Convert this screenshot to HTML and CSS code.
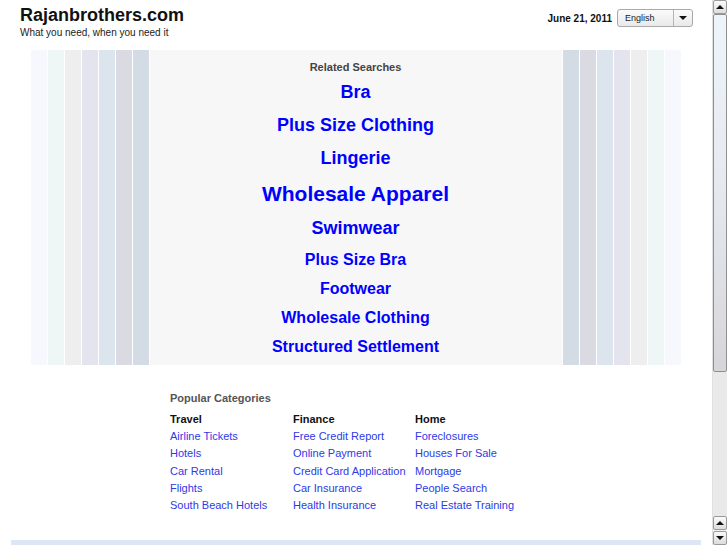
FILE: index.html
```html
<!DOCTYPE html>
<html>
<head>
<meta charset="utf-8">
<title>Rajanbrothers.com</title>
<link rel="stylesheet" href="styles.css">
</head>
<body>
<div class="page">
  <header class="header">
    <div class="brand">
      <div class="site-name">Rajanbrothers.com</div>
      <div class="tagline">What you need, when you need it</div>
    </div>
    <div class="tools">
      <span class="date">June 21, 2011</span>
      <div class="select">
        <span class="select-text">English</span>
        <span class="select-btn"><span class="tri-down"></span></span>
      </div>
    </div>
  </header>

  <div class="band">
    <div class="stripes left">
      <span class="st c1"></span><span class="st c2"></span><span class="st c3"></span><span class="st c4"></span><span class="st c5"></span><span class="st c6"></span><span class="st c7"></span>
    </div>
    <div class="panel">
      <div class="rs-title">Related Searches</div>
      <a class="rs s18" href="#">Bra</a>
      <a class="rs s18" href="#">Plus Size Clothing</a>
      <a class="rs s18" href="#">Lingerie</a>
      <a class="rs s21" href="#">Wholesale Apparel</a>
      <a class="rs s18" href="#">Swimwear</a>
      <a class="rs s16" href="#">Plus Size Bra</a>
      <a class="rs s16" href="#">Footwear</a>
      <a class="rs s16" href="#">Wholesale Clothing</a>
      <a class="rs s16" href="#">Structured Settlement</a>
    </div>
    <div class="stripes right">
      <span class="st c7"></span><span class="st c6"></span><span class="st c5"></span><span class="st c4"></span><span class="st c3"></span><span class="st c2"></span><span class="st c1"></span>
    </div>
  </div>

  <section class="cats">
    <div class="cats-title">Popular Categories</div>
    <div class="cats-grid">
      <div class="col">
        <div class="col-head">Travel</div>
        <a href="#">Airline Tickets</a>
        <a href="#">Hotels</a>
        <a href="#">Car Rental</a>
        <a href="#">Flights</a>
        <a href="#">South Beach Hotels</a>
      </div>
      <div class="col">
        <div class="col-head">Finance</div>
        <a href="#">Free Credit Report</a>
        <a href="#">Online Payment</a>
        <a href="#">Credit Card Application</a>
        <a href="#">Car Insurance</a>
        <a href="#">Health Insurance</a>
      </div>
      <div class="col">
        <div class="col-head">Home</div>
        <a href="#">Foreclosures</a>
        <a href="#">Houses For Sale</a>
        <a href="#">Mortgage</a>
        <a href="#">People Search</a>
        <a href="#">Real Estate Training</a>
      </div>
    </div>
  </section>

  <div class="footer-bar"></div>
</div>

<div class="scrollbar">
  <div class="sb-btn"><span class="tri-up"></span></div>
  <div class="sb-thumb"></div>
  <div class="sb-track"></div>
  <div class="sb-btn"><span class="tri-up"></span></div>
  <div class="sb-btn"><span class="tri-down small"></span></div>
</div>
</body>
</html>
```

FILE: styles.css
```css
html, body {
  margin: 0;
  padding: 0;
  height: 100%;
  overflow: hidden;
  background: #ffffff;
}

body {
  font-family: "Liberation Sans", Arial, Helvetica, sans-serif;
  color: #000;
}

a { text-decoration: none; }

.page {
  width: 712px;
}

/* Header */
.header {
  display: flex;
  justify-content: space-between;
  align-items: flex-start;
  padding: 5px 19px 0 20px;
  height: 45px;
  box-sizing: border-box;
}

.site-name {
  font-size: 18px;
  font-weight: bold;
  line-height: 20px;
  color: #111;
}

.tagline {
  margin-top: 2px;
  font-size: 10px;
  line-height: 12px;
  color: #222;
}

.tools {
  display: flex;
  align-items: center;
  gap: 5px;
  margin-top: 4px;
}

.date {
  font-size: 10px;
  font-weight: bold;
  color: #111;
}

.select {
  display: flex;
  width: 76px;
  height: 18px;
  box-sizing: border-box;
  border: 1px solid #a9a9a9;
  border-radius: 3px;
  background: linear-gradient(#fbfbfb, #e9e9e9);
}

.select-text {
  flex: 1;
  font-size: 9px;
  line-height: 16px;
  padding-left: 7px;
  color: #222;
}

.select-btn {
  width: 18px;
  border-left: 1px solid #b5b5b5;
  display: flex;
  align-items: center;
  justify-content: center;
}

.tri-down {
  width: 0;
  height: 0;
  border-left: 4px solid transparent;
  border-right: 4px solid transparent;
  border-top: 4px solid #111;
}

.tri-up {
  width: 0;
  height: 0;
  border-left: 4px solid transparent;
  border-right: 4px solid transparent;
  border-bottom: 4px solid #111;
}

/* Band with stripes */
.band {
  display: flex;
  width: 651px;
  margin: 5px auto 0;
  height: 315px;
}

.stripes {
  display: flex;
  width: 119px;
}

.st {
  width: 16px;
  height: 100%;
}

.left .st { margin-right: 1px; }
.right .st { margin-left: 1px; }

.c1 { background: #f7f8fe; }
.c2 { background: #eef6f6; }
.c3 { background: #eeeeee; }
.c4 { background: #e4e4ef; }
.c5 { background: #dce4ee; }
.c6 { background: #dadae2; }
.c7 { background: #d3dbe4; }

.panel {
  width: 412px;
  background: #f7f7f7;
  display: flex;
  flex-direction: column;
  align-items: center;
  padding-top: 10px;
  box-sizing: border-box;
}

.rs-title {
  font-size: 11px;
  font-weight: bold;
  line-height: 14px;
  color: #444;
  margin-bottom: 2px;
}

.rs {
  color: #0000ff;
  font-weight: bold;
  display: block;
  text-align: center;
}

.s18 { font-size: 18px; line-height: 33px; }
.s21 { font-size: 21px; line-height: 37px; }
.s16 { font-size: 16px; line-height: 29px; }

/* Categories */
.cats {
  width: 412px;
  margin: 26px auto 0;
  padding-left: 20px;
  box-sizing: border-box;
}

.cats-title {
  font-size: 11px;
  font-weight: bold;
  line-height: 14px;
  color: #555;
}

.cats-grid {
  display: grid;
  grid-template-columns: 123px 122px auto;
  margin-top: 7px;
}

.col {
  display: flex;
  flex-direction: column;
}

.col-head {
  font-size: 11px;
  font-weight: bold;
  line-height: 14px;
  color: #111;
  margin-bottom: 2px;
}

.col a {
  font-size: 11px;
  line-height: 17.3px;
  color: #2d3ae8;
  white-space: nowrap;
}

.footer-bar {
  width: 690px;
  height: 20px;
  margin: 26px auto 0;
  background: #dce6f4;
}

/* Scrollbar overlay */
.scrollbar {
  position: fixed;
  top: 0;
  right: 0;
  width: 15px;
  height: 545px;
  display: flex;
  flex-direction: column;
  background: #f2f2f2;
  border-left: 1px solid #e0e0e0;
  box-sizing: border-box;
}

.sb-btn {
  height: 14px;
  flex: none;
  box-sizing: border-box;
  border: 1px solid #9a9a9a;
  border-radius: 2px;
  background: linear-gradient(#fafafa, #dcdcdc);
  display: flex;
  align-items: center;
  justify-content: center;
}

.sb-btn + .sb-btn { margin-top: 1px; }

.sb-thumb {
  height: 358px;
  flex: none;
  box-sizing: border-box;
  border: 1px solid #8f8f8f;
  border-radius: 2px;
  background: linear-gradient(#eef5fa 0%, #e6e8ee 50%, #d6d6da 100%);
}

.sb-track {
  flex: 1;
  background-color: #f4f4f4;
  background-image: radial-gradient(#dcdcdc 0.6px, transparent 0.8px);
  background-size: 2px 2px;
}
```
